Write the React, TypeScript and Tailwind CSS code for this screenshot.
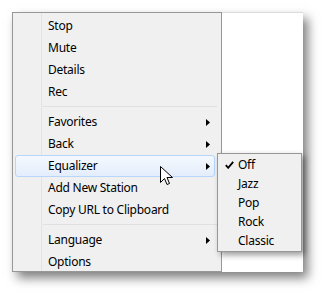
const font = { fontFamily: '"Noto Sans", "Open Sans", sans-serif' }

type Item = { label: string; sub?: boolean; active?: boolean } | 'sep'

const items: Item[] = [
  { label: 'Stop' },
  { label: 'Mute' },
  { label: 'Details' },
  { label: 'Rec' },
  'sep',
  { label: 'Favorites', sub: true },
  { label: 'Back', sub: true },
  { label: 'Equalizer', sub: true, active: true },
  { label: 'Add New Station' },
  { label: 'Copy URL to Clipboard' },
  'sep',
  { label: 'Language', sub: true },
  { label: 'Options' },
]

const presets = ['Off', 'Jazz', 'Pop', 'Rock', 'Classic']

function Arrow() {
  return (
    <svg width="4" height="7" viewBox="0 0 4 7" className="mr-[4px]">
      <path d="M0 0 L4 3.5 L0 7 Z" fill="#000" />
    </svg>
  )
}

function Check() {
  return (
    <svg width="9" height="8" viewBox="0 0 9 8">
      <path d="M0.8 4.2 L3.2 6.8 L8.2 0.8" fill="none" stroke="#000" strokeWidth="1.8" />
    </svg>
  )
}

function Cursor() {
  return (
    <svg width="13" height="21" viewBox="0 0 13 21" className="absolute left-[160px] top-[166px]">
      <path
        d="M0.5 0.5 L0.5 16.5 L4.5 12.5 L7 18.5 L9.5 17.5 L7 11.5 L12.5 11.5 Z"
        fill="#fff"
        stroke="#000"
        strokeWidth="1"
        strokeLinejoin="miter"
      />
    </svg>
  )
}

export default function App() {
  return (
    <div
      className="relative w-[323px] h-[292px] bg-white pl-[12px] pt-[12px] text-[12px] tracking-[-0.25px] text-black"
      style={font}
    >
      <div className="flex w-[291px] h-[260px] shadow-[5px_6px_10px_rgba(0,0,0,0.5)]">
        <div className="relative w-[210px] h-[260px] overflow-hidden border border-[#979797] bg-[#f0f0f0] px-[2px] pt-[2px]">
          <div className="absolute left-[28px] top-0 bottom-0 w-[2px] border-l border-[#e2e3e3] border-r-white" />
          <div className="relative flex flex-col">
            {items.map((it, i) =>
              it === 'sep' ? (
                <div key={i} className="h-[8px] flex flex-col justify-center pl-[28px] pr-[2px]">
                  <div className="h-[2px] border-t border-[#e0e0e0] border-b-white" />
                </div>
              ) : (
                <div
                  key={i}
                  className={`h-[22px] mr-[4px] flex items-center justify-between pl-[32px] rounded-[3px] border ${
                    it.active
                      ? 'border-[#b8d6fb] bg-gradient-to-b from-[#f5f9fe] to-[#e3edfb]'
                      : 'border-transparent'
                  }`}
                >
                  <span className="leading-none">{it.label}</span>
                  {it.sub && <Arrow />}
                </div>
              )
            )}
          </div>
        </div>
        <div className="w-[81px] h-[260px] bg-white border-t border-[#dcdcdc]" />
      </div>

      <div className="absolute left-[217px] top-[153px] w-[85px] h-[99px] border border-[#979797] bg-[#f0f0f0] pt-[1px] px-[2px] shadow-[3px_3px_6px_rgba(0,0,0,0.4)]">
        {presets.map((p, i) => (
          <div key={p} className="h-[19px] flex items-center">
            <div className="w-[18px] pl-[5px] flex items-center">{i === 0 && <Check />}</div>
            <span className="leading-none">{p}</span>
          </div>
        ))}
      </div>

      <Cursor />
    </div>
  )
}
